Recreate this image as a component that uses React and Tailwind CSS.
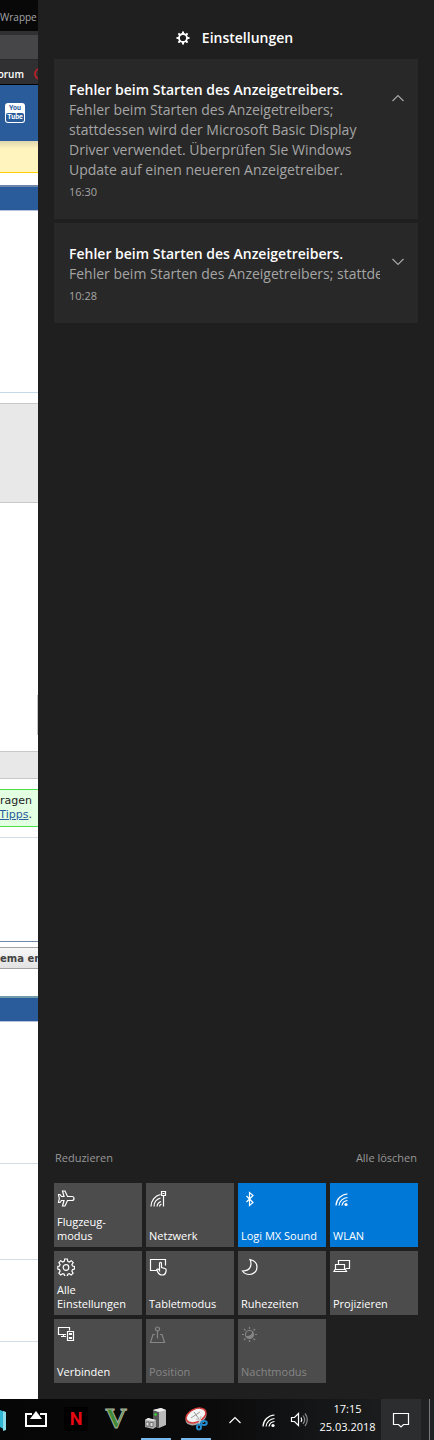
import React, { useState } from 'react';
import clsx from 'clsx';

const Icon = ({ size = 18, children }) => (
  <svg
    width={size}
    height={size}
    viewBox={`0 0 ${size} ${size}`}
    fill="none"
    stroke="currentColor"
    strokeWidth="1.2"
    aria-hidden="true"
  >
    {children}
  </svg>
);

const PlaneIcon = () => (
  <Icon>
    <path d="M5.5 1h2.500l2.500 5.500h4.500c1.500 0 2 .8 2 2s-.5 2-2 2h-4.500L8 16H5.500l1.500-5.500H4.500L3 12.500H1.500l.8-4-.8-4H3l1.500 2H7z" />
  </Icon>
);

const NetworkIcon = () => (
  <Icon>
    <path d="M2 16.500A12 12 0 0 1 11.500 4.500M5 16.500A9 9 0 0 1 11.500 8M8 16.500A6 6 0 0 1 12 11.500M10.500 16.500a3 3 0 0 1 2-2.500" />
    <path d="M12.500 1.500h4v4h-4zM14.500 5.500v11M13.500 3.500h2" />
  </Icon>
);

const BluetoothIcon = () => (
  <Icon>
    <path d="M5.500 6l6.500 6.500-3.500 3V2.500L12 5.500 5.500 12" />
  </Icon>
);

const WifiIcon = () => (
  <Icon>
    <path d="M3 15.500A12 12 0 0 1 14.500 4M6 15.500A9 9 0 0 1 14.500 7.500M9 15.500A6 6 0 0 1 14.500 10.500" />
    <circle cx="13" cy="14.500" r="1.600" fill="currentColor" stroke="none" />
  </Icon>
);

const GearIcon = () => (
  <Icon>
    <path d="M7.700 1h2.600l.5 2.300 1.500.7 2-1.300 1.900 1.900-1.300 2 .6 1.400 2 .5v2.600l-2 .5-.6 1.500 1.200 2-1.900 1.800-2-1.200-1.400.6-.5 2H7.700l-.5-2-1.500-.6-2 1.200-1.800-1.800 1.200-2-.6-1.500-1.700-.5V8.500l1.700-.5.6-1.400-1.200-2 1.800-1.900 2 1.300 1.500-.7z" />
    <circle cx="9" cy="9.500" r="2.800" />
  </Icon>
);

const TabletIcon = () => (
  <Icon>
    <path d="M8 12.500H1.500v-11h15v6" />
    <path d="M10.500 11.500V5.500c0-1.500 2-1.500 2 0v4l3.500 1c1 .3 1.300 1 1.200 2l-.5 2c-.4 1.500-1.200 2.500-3.200 2.500-2.500 0-4-1-5-3.500l-.8-2c.8-.8 1.800-.5 2.800 1z" />
  </Icon>
);

const MoonIcon = () => (
  <Icon>
    <path d="M9 1.500c4.500 1 7 4 7 7.500 0 4-3.200 7.500-7.500 7.500-3 0-5.500-1.200-7-3.500 4.500 0 7-1.500 8-4.500.8-2.500.5-5-.5-7z" />
  </Icon>
);

const ProjectIcon = () => (
  <Icon>
    <path d="M5.500 6.500v-4h11v8h-4M2.500 11.500v-5h9v5zM1 13.500h12.500l-1-2h-10.500z" />
  </Icon>
);

const ConnectIcon = () => (
  <Icon>
    <path d="M9 8.500H1.500v-7h11v3M4 10.500h5M6.500 8.500v2" />
    <path d="M10.500 5.500h6v9h-6z" />
    <path d="M12.500 7.500h2v1h-2zM12.500 11.500h2v1h-2z" />
  </Icon>
);

const PositionIcon = () => (
  <Icon>
    <circle cx="8.500" cy="3" r="2" />
    <path d="M8.500 5v7.500M6 8.500H4l-2.500 8h14l-2.500-8h-2" />
  </Icon>
);

const NightIcon = () => (
  <Icon>
    <circle cx="8.500" cy="8.500" r="4" />
    <path d="M11 5c.5 3-1.500 5-6 5 1 3 7.500 3 7.500-1.500 0-1.500-.6-2.700-1.500-3.500z" fill="currentColor" stroke="none" />
    <path d="M8.500 1v2M8.500 14v2M1 8.500h2M14 8.500h2M3 3l1.500 1.500M12.500 12.500L14 14M14 3l-1.500 1.500M4.500 12.500L3 14" />
  </Icon>
);

const Chevron = ({ up }) => (
  <svg width="12" height="8" viewBox="0 0 12 8" fill="none" stroke="currentColor" strokeWidth="1.200" aria-hidden="true">
    <path d={up ? 'M.5 7L6 1.500 11.500 7' : 'M.5 1L6 6.500 11.500 1'} />
  </svg>
);

const message =
  'Fehler beim Starten des Anzeigetreibers; stattdessen wird der Microsoft Basic Display Driver verwendet. Überprüfen Sie Windows Update auf einen neueren Anzeigetreiber.';

const notifications = [
  { time: '16:30', open: true },
  { time: '10:28', open: false }
];

const actions = [
  { label: 'Flugzeug-\nmodus', icon: PlaneIcon },
  { label: 'Netzwerk', icon: NetworkIcon },
  { label: 'Logi MX Sound', icon: BluetoothIcon, active: true },
  { label: 'WLAN', icon: WifiIcon, active: true },
  { label: 'Alle\nEinstellungen', icon: GearIcon },
  { label: 'Tabletmodus', icon: TabletIcon },
  { label: 'Ruhezeiten', icon: MoonIcon },
  { label: 'Projizieren', icon: ProjectIcon },
  { label: 'Verbinden', icon: ConnectIcon },
  { label: 'Position', icon: PositionIcon, disabled: true },
  { label: 'Nachtmodus', icon: NightIcon, disabled: true }
];

const Notification = ({ time, open: initial }) => {
  const [open, setOpen] = useState(initial);

  return (
    <article className="flex items-start gap-3 bg-[#282828] pt-[21px] pr-3.5 pb-[17px] pl-[15px]">
      <div className="min-w-0 flex-1">
        <h2 className="truncate text-sm leading-5 font-semibold text-white">
          Fehler beim Starten des Anzeigetreibers.
        </h2>
        <p className={clsx('text-sm leading-5 text-[#a5a5a5]', !open && 'overflow-hidden whitespace-nowrap')}>
          {message}
        </p>
        <time className="block pt-0.5 text-[11px] leading-5 text-[#a5a5a5]">{time}</time>
      </div>
      <button
        type="button"
        aria-label={open ? 'Weniger anzeigen' : 'Mehr anzeigen'}
        onClick={() => setOpen(!open)}
        className="mt-3.5 text-[#a5a5a5]"
      >
        <Chevron up={open} />
      </button>
    </article>
  );
};

const QuickAction = ({ label, icon: Glyph, active, disabled }) => (
  <button
    type="button"
    disabled={disabled}
    className={clsx(
      'flex h-16 min-w-0 flex-col items-start justify-between pt-[7px] pb-1 pl-[3px] text-left',
      active ? 'bg-[#0078d7]' : 'bg-[#4c4c4c]',
      disabled ? 'text-[#868686]' : 'text-white'
    )}
  >
    <Glyph />
    <span className="text-[11px] leading-[14px] whitespace-pre-line">{label}</span>
  </button>
);

// The strip of the browser window that stays visible beside the panel
const BrowserEdge = () => (
  <div className="flex w-[38px] shrink-0 flex-col overflow-hidden bg-white whitespace-nowrap">
    <div className="h-[31px] bg-[#080808] pt-[9px] text-[10px] leading-4 text-[#a5a5a8]">Wrappe</div>
    <div className="h-1 bg-[#303032]" />
    <div className="h-[25px] border-b border-[#29292b] bg-[#464648]" />
    <div className="flex h-[25px] items-center gap-2.5 border-b border-black bg-[#303032] pt-1 text-[10px] font-semibold text-white">
      <span className="flex w-6 justify-end">orum</span>
      <span className="size-3 shrink-0 rounded-full border-2 border-[#b3222a]" />
    </div>
    <div className="h-14 bg-[#2a5b9b] pt-[18px] pl-[5px]">
      <a
        href="#youtube"
        className="flex size-5 flex-col items-center rounded-[3px] bg-white pt-px font-['Roboto',sans-serif] text-[7px] leading-[9px] font-bold text-[#2a5b9b]"
      >
        <span>You</span>
        <span className="rounded-xs bg-[#2a5b9b] px-px text-white">Tube</span>
      </a>
    </div>
    <div className="h-8 border-b border-[#ffcf00] bg-linear-to-b from-[#dfd6ae] to-[#fff4be] to-25%" />
    <div className="h-3" />
    <div className="h-[26px] border-t-2 border-b border-t-[#6c86ad] border-b-[#b8bfdf] bg-[#2a5b9b]" />
    <div className="h-[182px] border-b border-[#c6d9e8]" />
    <div className="h-2.5" />
    <div className="h-[100px] border-y border-[#c8c8c8] bg-[#e8e8e8]" />
    <div className="h-48" />
    <div className="h-10 border-r border-[#c4c4c4]" />
    <div className="h-4" />
    <div className="h-7 border-y border-[#c8c8c8] bg-[#e8e8e8]" />
    <div className="h-2.5" />
    <div className="h-[38px] border-y border-[#4be04b] bg-[#e2ffe2] pt-1 font-['DejaVu_Sans',sans-serif] text-[11px] leading-[14px] text-[#222]">
      <p className="flex w-8 justify-end">ragen</p>
      <p className="flex w-8 justify-end">
        <a href="#tipps" className="text-[#2a5b9b] underline">Tipps</a>.
      </p>
    </div>
    <div className="h-[11px] border-b border-[#d3dde6]" />
    <div className="h-[104px] border-b border-[#6f89a8]" />
    <div className="h-[5px]" />
    <button
      type="button"
      className="flex h-[22px] items-center border-y border-[#a2a2a2] bg-linear-to-b from-[#f8f8f8] to-[#e2e2e2] font-['DejaVu_Sans',sans-serif] text-[10px] font-bold text-[#444]"
    >
      ema er
    </button>
    <div className="h-[27px]" />
    <div className="h-[26px] border-t-2 border-b border-t-[#6f9ca8] border-b-[#b8bfdf] bg-[#2a5b9b]" />
    <div className="h-[142px] border-b border-[#d3dde6]" />
    <div className="h-24 border-b border-[#d3dde6]" />
    <div className="h-[82px] border-b border-[#d3dde6]" />
  </div>
);

const ActionCenter = () => (
  <main className="flex min-w-0 flex-1 flex-col bg-[#1f1f1f] px-4 pb-4">
    <header className="flex h-[59px] items-center justify-center pt-4 pr-[3px]">
      <button type="button" className="flex items-center gap-3 text-sm leading-5 font-semibold text-white">
        <svg width="14" height="14" viewBox="0 0 14 14" fill="none" stroke="currentColor" aria-hidden="true">
          <circle cx="7" cy="7" r="4" strokeWidth="1.800" />
          <path d="M7 .5v2.500M7 11v2.500M.5 7H3M11 7h2.500M2.400 2.400l1.800 1.800M9.800 9.800l1.800 1.800M11.600 2.400L9.800 4.200M4.200 9.800l-1.800 1.800" strokeWidth="2" />
        </svg>
        <span>Einstellungen</span>
      </button>
    </header>

    <section className="flex flex-col gap-1">
      {notifications.map((item) => (
        <Notification key={item.time} {...item} />
      ))}
    </section>

    <div className="mt-auto flex justify-between px-px pb-[15px] text-[11px] leading-5 text-[#989898]">
      <button type="button">Reduzieren</button>
      <button type="button">Alle löschen</button>
    </div>

    {/* Quick actions */}
    <section className="grid grid-cols-4 gap-1">
      {actions.map((action) => (
        <QuickAction key={action.label} {...action} />
      ))}
    </section>
  </main>
);

const TaskButton = ({ label, running, children }) => (
  <button type="button" aria-label={label} className="flex w-10 shrink-0 px-[5px]">
    <span
      className={clsx(
        'flex h-full w-full items-center justify-center border-b-2',
        running ? 'border-[#76b9ed]' : 'border-transparent'
      )}
    >
      {children}
    </span>
  </button>
);

const Taskbar = () => (
  <footer className="flex h-[41px] bg-linear-to-r from-[#060606] via-[#0b0b0c] to-[#202223] text-white">
    <button type="button" aria-label="Store" className="flex w-4 items-center">
      <svg width="7" height="24" viewBox="0 0 7 24" aria-hidden="true">
        <path d="M0 2l5 2v18l-5-3z" fill="#31b6d5" />
        <path d="M3 3l3 1v18l-3 1z" fill="#8bddeb" />
      </svg>
    </button>
    <TaskButton label="AirPlay">
      <svg width="22" height="16" viewBox="0 0 22 16" fill="none" stroke="currentColor" strokeWidth="2" aria-hidden="true">
        <path d="M7 3H1v12h20V3h-6" />
        <path d="M11 0l6 8H5z" fill="currentColor" stroke="none" />
      </svg>
    </TaskButton>
    <TaskButton label="Netflix">
      <span className="flex size-6 items-center justify-center bg-black font-['Roboto',sans-serif] text-lg leading-6 font-bold text-[#e50914]">
        N
      </span>
    </TaskButton>
    <TaskButton label="GTA V">
      <svg width="26" height="24" viewBox="0 0 26 24" aria-hidden="true">
        <text
          x="13"
          y="21"
          textAnchor="middle"
          fontFamily="Liberation Serif, serif"
          fontWeight="700"
          fontSize="30"
          fill="#3f8a32"
          stroke="#a9b09f"
          strokeWidth="1"
        >
          V
        </text>
      </svg>
    </TaskButton>
    <TaskButton label="Geräte" running>
      <svg width="24" height="24" viewBox="0 0 24 24" aria-hidden="true">
        <path d="M9 3l8-2 5 2v15l-7 3-6-2z" fill="#b9b9b9" />
        <path d="M9 3l6 2v16l-6-2z" fill="#555" />
        <path d="M9 3l8-2 5 2-7 2z" fill="#eee" />
        <circle cx="11.500" cy="7.500" r="1.300" fill="#38d430" />
        <path d="M1 13l3-2 8 2v7l-3 2-8-2z" fill="#ababab" />
        <path d="M1 13l3-2 8 2-3 1z" fill="#e8e8e8" />
        <path d="M2 15h3v4H2zM6 15.500h3v4H6z" fill="#dedede" stroke="#737373" />
      </svg>
    </TaskButton>
    <TaskButton label="Snipping Tool" running>
      <svg width="24" height="24" viewBox="0 0 24 24" fill="none" aria-hidden="true">
        <ellipse cx="12" cy="10.500" rx="11" ry="7" fill="#aaa" transform="rotate(-25 12 10.500)" />
        <ellipse cx="12" cy="8.500" rx="10.500" ry="6.500" fill="#f3f3f3" stroke="#d43b3b" strokeWidth="1.500" transform="rotate(-25 12 8.500)" />
        <path d="M7 11l9-6M10 5l5 7" stroke="#999" strokeWidth="1" />
        <path d="M12 12l8 3M17 9l-2 8" stroke="#ccc" strokeWidth="1.500" />
        <ellipse cx="20" cy="16" rx="2.800" ry="2" stroke="#238bd0" strokeWidth="2" />
        <ellipse cx="15" cy="20" rx="2" ry="2.600" stroke="#238bd0" strokeWidth="2" />
      </svg>
    </TaskButton>

    {/* Tray */}
    <div className="ml-auto flex items-stretch">
      <button type="button" aria-label="Ausgeblendete Symbole" className="flex w-[38px] items-center justify-center">
        <Chevron up />
      </button>
      <button type="button" aria-label="WLAN" className="flex w-[30px] items-center justify-center">
        <WifiIcon />
      </button>
      <button type="button" aria-label="Lautstärke" className="flex w-[30px] items-center justify-center">
        <Icon>
          <path d="M1.500 6.500h3l4-4v12l-4-4h-3z" />
          <path d="M11 6.500c1 1.500 1 3 0 4.500" />
          <path d="M13 4.500c2 2.500 2 6 0 8.500M15 2.500c3 3.500 3 9 0 12.500" opacity=".5" />
        </Icon>
      </button>
      <time className="flex w-[67px] flex-col items-center pt-px text-[11px] leading-[18px] whitespace-nowrap">
        <span>17:15</span>
        <span>25.03.2018</span>
      </time>
      <button type="button" aria-label="Info-Center" className="flex w-10 items-center justify-center bg-[#2b2d2e]">
        <Icon>
          <path d="M1.500 2.500h15v11h-5l-2.500 2.500-2.500-2.500h-5z" />
        </Icon>
      </button>
      <button type="button" aria-label="Desktop anzeigen" className="flex w-[13px] justify-end pr-1">
        <span className="h-full w-px bg-[#77797a]" />
      </button>
    </div>
  </footer>
);

const App = () => (
  <div className="flex min-h-screen flex-col bg-[#1f1f1f] font-['Open_Sans','Noto_Sans',sans-serif]">
    <div className="flex flex-1">
      <BrowserEdge />
      <ActionCenter />
    </div>
    <Taskbar />
  </div>
);

export default App;
